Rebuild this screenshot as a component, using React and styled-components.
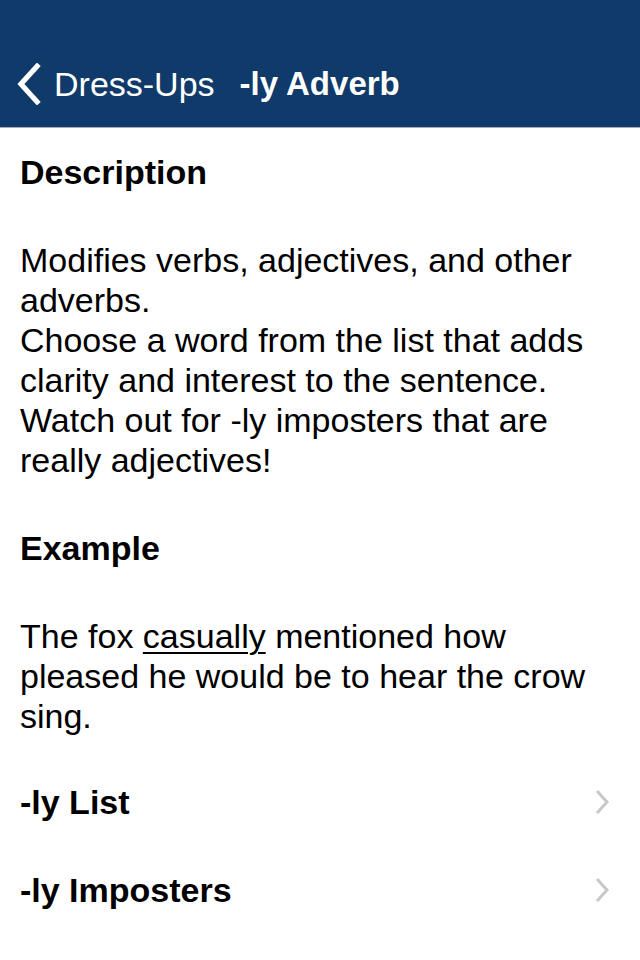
import React from 'react'
import styled, { createGlobalStyle } from 'styled-components'

const GlobalStyle = createGlobalStyle`
  html, body {
    margin: 0;
    padding: 0;
    background: #fff;
  }
  body {
    font-family: "Liberation Sans", Arial, sans-serif;
    -webkit-font-smoothing: antialiased;
  }
`

const Page = styled.div`
  width: 640px;
  min-height: 960px;
  background: #fff;
`

const NavBar = styled.header`
  height: 128px;
  box-sizing: border-box;
  padding-top: 40px;
  background: #0f3a6a;
  border-bottom: 1px solid #a9adb3;
  display: flex;
`

const NavInner = styled.div`
  height: 88px;
  display: flex;
  align-items: center;
  padding-left: 16px;
  color: #fff;
  font-size: 34px;
`

const BackButton = styled.button`
  display: flex;
  align-items: center;
  gap: 12px;
  background: none;
  border: none;
  padding: 0;
  color: #fff;
  font: inherit;
  cursor: pointer;
`

const NavTitle = styled.h1`
  margin: 0 0 0 25px;
  font-size: 33px;
  font-weight: bold;
`

const Content = styled.main`
  padding: 24px 20px 0;
`

const Heading = styled.h2`
  margin: 0 0 48px;
  font-size: 34px;
  line-height: 40px;
  font-weight: bold;
  color: #000;
`

const Body = styled.p`
  margin: 0 0 48px;
  font-size: 34px;
  line-height: 40px;
  color: #000;
`

const Underline = styled.span`
  text-decoration: underline;
  text-underline-offset: 4px;
  text-decoration-thickness: 2px;
`

const List = styled.ul`
  list-style: none;
  margin: -26px 0 0;
  padding: 0;
`

const Row = styled.li`
  height: 88px;
  display: flex;
  align-items: center;
  justify-content: space-between;
  font-size: 34px;
  font-weight: bold;
  color: #000;
  padding-right: 10px;
`

const Chevron = ({ color, width, height, stroke }) => (
  <svg width={width} height={height} viewBox="0 0 16 26" fill="none">
    <path d="M13 2 L3 13 L13 24" stroke={color} strokeWidth={stroke} strokeLinecap="square" />
  </svg>
)

const Disclosure = () => (
  <svg width="16" height="26" viewBox="0 0 16 26" fill="none">
    <path d="M3 2 L13 13 L3 24" stroke="#c7c7cc" strokeWidth="3" />
  </svg>
)

export default function App() {
  return (
    <Page>
      <GlobalStyle />
      <NavBar>
        <NavInner>
          <BackButton>
            <Chevron color="#fff" width={26} height={42} stroke={3.2} />
            Dress-Ups
          </BackButton>
          <NavTitle>-ly Adverb</NavTitle>
        </NavInner>
      </NavBar>
      <Content>
        <Heading>Description</Heading>
        <Body>
          Modifies verbs, adjectives, and other adverbs.
          <br />
          Choose a word from the list that adds clarity and interest to the sentence.
          <br />
          Watch out for -ly imposters that are really adjectives!
        </Body>
        <Heading>Example</Heading>
        <Body>
          The fox <Underline>casually</Underline> mentioned how pleased he would be to hear the crow sing.
        </Body>
        <List>
          <Row>-ly List<Disclosure /></Row>
          <Row>-ly Imposters<Disclosure /></Row>
        </List>
      </Content>
    </Page>
  )
}
